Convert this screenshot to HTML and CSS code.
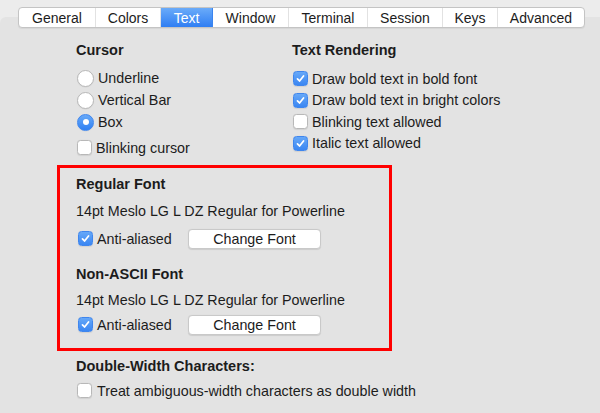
FILE: index.html
```html
<!DOCTYPE html>
<html>
<head>
<meta charset="utf-8">
<link rel="stylesheet" href="styles.css">
</head>
<body>
<div class="window">
  <nav class="tabs">
    <span class="tab t-general">General</span>
    <span class="tab t-colors">Colors</span>
    <span class="tab t-text selected">Text</span>
    <span class="tab t-window">Window</span>
    <span class="tab t-terminal">Terminal</span>
    <span class="tab t-session">Session</span>
    <span class="tab t-keys">Keys</span>
    <span class="tab t-advanced">Advanced</span>
  </nav>
  <div class="panel">
    <div class="cols">
      <div class="col col-left">
        <div class="heading">Cursor</div>
        <div class="list">
          <div class="row"><span class="radio"></span><span class="lbl-r">Underline</span></div>
          <div class="row"><span class="radio"></span><span class="lbl-r">Vertical Bar</span></div>
          <div class="row"><span class="radio on"></span><span class="lbl-r">Box</span></div>
        </div>
        <div class="row blink"><span class="check"></span><span class="lbl">Blinking cursor</span></div>
      </div>
      <div class="col col-right">
        <div class="heading">Text Rendering</div>
        <div class="list list-right">
          <div class="row rrow"><span class="check on"><svg viewBox="0 0 15 15"><path d="M4 7.9 L6.4 10.4 L11 4.6"/></svg></span><span class="lbl">Draw bold text in bold font</span></div>
          <div class="row rrow"><span class="check on"><svg viewBox="0 0 15 15"><path d="M4 7.9 L6.4 10.4 L11 4.6"/></svg></span><span class="lbl">Draw bold text in bright colors</span></div>
          <div class="row rrow"><span class="check"></span><span class="lbl">Blinking text allowed</span></div>
          <div class="row rrow"><span class="check on"><svg viewBox="0 0 15 15"><path d="M4 7.9 L6.4 10.4 L11 4.6"/></svg></span><span class="lbl">Italic text allowed</span></div>
        </div>
      </div>
    </div>

    <div class="fonts">
      <div class="heading">Regular Font</div>
      <div class="fontname">14pt Meslo LG L DZ Regular for Powerline</div>
      <div class="row frow"><span class="check on"><svg viewBox="0 0 15 15"><path d="M4 7.9 L6.4 10.4 L11 4.6"/></svg></span><span class="lbl aa">Anti-aliased</span><span class="btn">Change Font</span></div>
      <div class="heading h2">Non-ASCII Font</div>
      <div class="fontname fn2">14pt Meslo LG L DZ Regular for Powerline</div>
      <div class="row frow frow2"><span class="check on"><svg viewBox="0 0 15 15"><path d="M4 7.9 L6.4 10.4 L11 4.6"/></svg></span><span class="lbl aa">Anti-aliased</span><span class="btn">Change Font</span></div>
    </div>

    <div class="dw">
      <div class="heading">Double-Width Characters:</div>
      <div class="row dwrow"><span class="check"></span><span class="lbl lbl-dw">Treat ambiguous-width characters as double width</span></div>
    </div>
  </div>
</div>
</body>
</html>
```

FILE: styles.css
```css
* { box-sizing: border-box; }
html, body { margin: 0; padding: 0; }
body {
  width: 600px;
  height: 413px;
  overflow: hidden;
  background: #ececec;
  font-family: "Liberation Sans", Arial, sans-serif;
  font-size: 14.3px;
  color: #1c1c1c;
}
.window {
  padding-top: 7px;
  height: 413px;
}
.tabs {
  position: relative;
  z-index: 1;
  display: flex;
  margin-left: 18px;
  width: 567px;
  height: 21px;
  background: #fff;
  border: 1px solid #c4c4c4;
  border-radius: 4px;
  box-shadow: 0 1px 1px rgba(0,0,0,0.06);
  overflow: hidden;
  font-size: 14px;
}
.tab {
  display: flex;
  align-items: center;
  justify-content: center;
  height: 100%;
  border-right: 1px solid #e2e2e2;
  line-height: 19px;
  padding-top: 1px;
}
.tab:last-child { border-right: none; }
.t-general { width: 77px; }
.t-colors { width: 65px; }
.t-text { width: 52px; }
.t-window { width: 76px; }
.t-terminal { width: 79px; }
.t-session { width: 75px; }
.t-keys { width: 55px; }
.t-advanced { flex: 1; }
.tab.selected {
  background: linear-gradient(#6aabf9, #2f7ef3);
  color: #fff;
  border-right-color: #3a84ef;
}
.panel {
  margin-top: -11px;
  height: 406px;
  background: #e3e3e3;
  border-top-left-radius: 6px;
  padding: 24px 0 0 57px;
}
.cols {
  display: flex;
  padding-left: 19px;
}
.col-left { width: 216px; }
.heading {
  font-weight: bold;
  font-size: 14.5px;
  line-height: 18px;
  height: 18px;
}
.list { margin-top: 8px; }
.list-right { margin-top: 9px; }
.row {
  display: flex;
  align-items: center;
  height: 22px;
}
.rrow { height: 21.5px; }
.blink { margin-top: 3.5px; }
.radio {
  width: 17px;
  height: 17px;
  border-radius: 50%;
  background: #fff;
  border: 1px solid #b8b8b8;
  box-shadow: 0 0.5px 1px rgba(0,0,0,0.08);
  margin-left: 1px;
  position: relative;
  flex: none;
}
.radio.on {
  background: linear-gradient(#69aaf8, #2f80f3);
  border-color: #3f86ee;
}
.radio.on::after {
  content: "";
  position: absolute;
  left: 4.5px;
  top: 4.5px;
  width: 6px;
  height: 6px;
  border-radius: 50%;
  background: #fff;
}
.lbl-r { margin-left: 4px; }
.check {
  width: 15px;
  height: 15px;
  border-radius: 3.5px;
  background: #fff;
  border: 1px solid #b8b8b8;
  box-shadow: 0 0.5px 1px rgba(0,0,0,0.08);
  margin-left: 1px;
  flex: none;
  display: flex;
}
.check.on {
  background: linear-gradient(#66a8f8, #3a86f2);
  border-color: #3f86ee;
}
.check svg {
  width: 13px;
  height: 13px;
}
.check svg path {
  fill: none;
  stroke: #fff;
  stroke-width: 2;
  stroke-linecap: round;
  stroke-linejoin: round;
}
.lbl { margin-left: 4px; }
.fonts {
  margin-top: 6px;
  width: 335px;
  border: 3px solid #ff0000;
  padding: 7px 0 12px 16px;
}
.fontname {
  margin-top: 9px;
  line-height: 18px;
  height: 18px;
}
.frow { margin-top: 8px; }
.frow .check { margin-left: 2px; }
.h2 { margin-top: 15px; }
.fn2 { margin-top: 8px; }
.frow2 { margin-top: 5px; }
.aa { width: 91px; margin-left: 4px; }
.btn {
  width: 133px;
  height: 20px;
  background: #fff;
  border-radius: 4px;
  border: 1px solid #c9c9c9;
  box-shadow: 0 0.5px 1px rgba(0,0,0,0.1);
  display: flex;
  align-items: center;
  justify-content: center;
  line-height: 18px;
}
.dw {
  padding-left: 19px;
  margin-top: 6px;
}
.dwrow { margin-top: 5px; }
.dwrow .check { margin-left: 1px; }
.lbl-dw { margin-left: 5px; }
```
